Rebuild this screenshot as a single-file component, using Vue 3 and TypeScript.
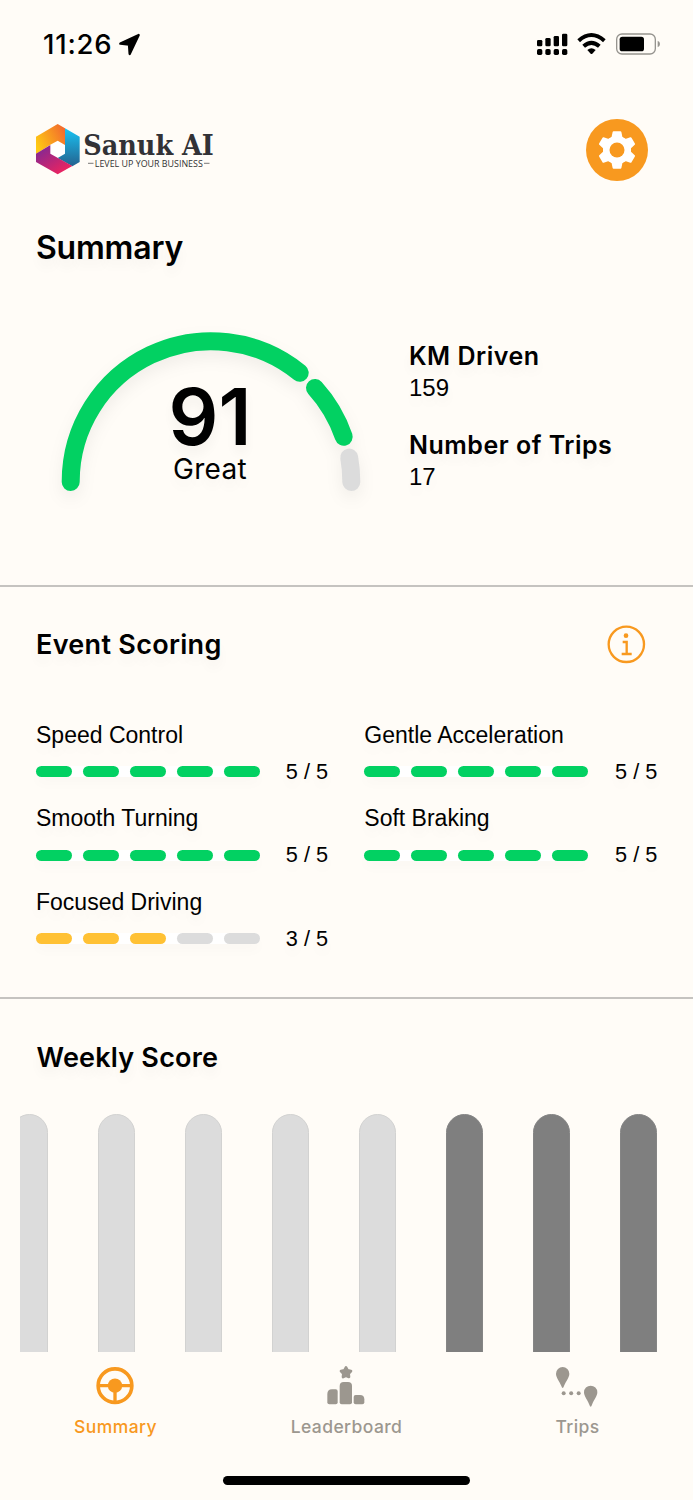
<script setup lang="ts">
interface EventScore {
  label: string
  score: number
}

const events: EventScore[] = [
  { label: 'Speed Control', score: 5 },
  { label: 'Gentle Acceleration', score: 5 },
  { label: 'Smooth Turning', score: 5 },
  { label: 'Soft Braking', score: 5 },
  { label: 'Focused Driving', score: 3 },
]

const segmentClass = (score: number, n: number): string =>
  n > score ? 'off' : score >= 4 ? 'good' : 'fair'

const weeks: boolean[] = [false, false, false, false, false, true, true, true]
const teeth: number[] = [0, 60, 120, 180, 240, 300]
</script>

<template>
  <div class="screen">
    <div class="status">
      <span class="time">11:26</span>
      <svg class="arrow" viewBox="294 69 68 69">
        <path d="M356 75 L301 101 L327 104 L329 132 Z" stroke="#000" stroke-width="7" stroke-linejoin="round" />
      </svg>
      <svg class="radio" viewBox="51 36 372 72">
        <g>
          <rect x="51" y="60" width="16" height="19" rx="4" />
          <rect x="76" y="54" width="16" height="25" rx="4" />
          <rect x="101" y="48" width="16" height="31" rx="4" />
          <rect x="126" y="41" width="16" height="38" rx="4" />
          <rect v-for="x in [51, 76, 101, 126]" :key="x" :x="x" y="87" width="16" height="18" rx="5" />
        </g>
        <g fill="none" stroke="#000" stroke-width="12">
          <path d="M176 62 Q214 28 253 62" />
          <path d="M191 79 Q214 58 238 79" />
        </g>
        <path d="M202 90 Q214 79 227 90 L217 101 Q214 103 212 101 Z" />
        <rect x="290" y="42" width="116" height="60" rx="16" fill="none" stroke="#96948f" stroke-width="4" />
        <rect x="299" y="50" width="73" height="44" rx="8" />
        <path d="M413 62 Q420 65 420 72 Q420 79 413 82 Z" fill="#96948f" />
      </svg>
    </div>

    <header class="header">
      <svg class="logo" viewBox="0 0 180 52">
        <defs>
          <linearGradient id="warm" x1="0" y1="0.7" x2="1" y2="0.2"><stop offset="0" stop-color="#ffcb12" /><stop offset="1" stop-color="#f26a2e" /></linearGradient>
          <linearGradient id="cool" x1="0.5" y1="0" x2="0.5" y2="1"><stop offset="0" stop-color="#19c3f3" /><stop offset="1" stop-color="#24628f" /></linearGradient>
          <linearGradient id="berry" x1="0" y1="0" x2="0.8" y2="1"><stop offset="0" stop-color="#74299a" /><stop offset="1" stop-color="#f4235c" /></linearGradient>
        </defs>
        <g transform="translate(-16 -113) scale(0.33333)">
          <path fill="#fff" d="M113 391 L137 404 V432 L113 446 L89 432 V404Z" />
          <path fill="url(#warm)" d="M48 380 L113 342 L135 355 V405 L113 392 L91 404 L48 432Z" />
          <path fill="url(#cool)" d="M135 355 L179 380 V456 L157 469 L113 444 L135 431Z" />
          <path fill="url(#berry)" d="M48 431 L91 405 V431 L157 468 L113 493 L48 456Z" />
        </g>
        <text class="brand" x="47.300" y="32.300" textLength="130.500" lengthAdjust="spacingAndGlyphs">Sanuk AI</text>
        <path d="M52 40.300 H57.500 M168 40.300 H173.500" stroke="#555" stroke-width="0.8" />
        <text class="tagline" x="58.800" y="43.600" textLength="108" lengthAdjust="spacingAndGlyphs">LEVEL UP YOUR BUSINESS</text>
      </svg>
      <div class="settings">
        <svg viewBox="-31 -31 62 62">
          <g fill="#fff" stroke="#fff" stroke-width="2" stroke-linejoin="round">
            <circle r="13" />
            <path v-for="a in teeth" :key="a" :transform="`rotate(${a})`" d="M-3.400 -17.700 H3.400 L4.500 -12.500 L7 -10 H-7 L-4.500 -12.500Z" />
          </g>
          <circle r="7.500" fill="#f8991f" />
        </svg>
      </div>
    </header>

    <section class="summary">
      <h1>Summary</h1>
      <div class="overview">
        <div class="gauge">
          <svg viewBox="0 0 340 200">
            <g fill="none" stroke-width="18" stroke-linecap="round">
              <path d="M30.700 172 A140.400 140.400 0 0 1 259.700 62.700" stroke="#02d162" />
              <path d="M275 78 A140.400 140.400 0 0 1 303.700 126.700" stroke="#02d162" />
              <path d="M309.200 147.500 A140.400 140.400 0 0 1 311.300 172" stroke="#dcdcdc" />
            </g>
          </svg>
          <div class="reading">
            <strong>91</strong>
            <span>Great</span>
          </div>
        </div>
        <dl class="facts">
          <dt>KM Driven</dt>
          <dd>159</dd>
          <dt class="trips">Number of Trips</dt>
          <dd>17</dd>
        </dl>
      </div>
    </section>

    <section class="events">
      <div class="title-row">
        <h2>Event Scoring</h2>
        <svg class="info" viewBox="771 44 116 116">
          <g fill="none" stroke="#f8991f">
            <circle cx="829" cy="102" r="53" stroke-width="7" />
            <path d="M818 95 H830 V131 M815 131 H845" stroke-width="7" />
          </g>
          <circle cx="828" cy="76" r="7" fill="#f8991f" />
        </svg>
      </div>
      <div class="grid">
        <div v-for="e in events" :key="e.label" class="event">
          <div class="label">{{ e.label }}</div>
          <div class="meter">
            <div class="track">
              <i v-for="n in 5" :key="n" :class="segmentClass(e.score, n)"></i>
            </div>
            <span class="score">{{ e.score }} / 5</span>
          </div>
        </div>
      </div>
    </section>

    <section class="weekly">
      <h2>Weekly Score</h2>
      <div class="bars">
        <div v-for="(active, i) in weeks" :key="i" class="bar" :class="{ active }"></div>
      </div>
    </section>

    <nav class="tabs">
      <div class="tab current">
        <svg viewBox="97 69 138 132">
          <g fill="none" stroke="currentColor">
            <circle cx="166" cy="137" r="50.500" stroke-width="11" />
            <path d="M116 137 H216 M166 137 V187" stroke-width="10" />
          </g>
          <circle cx="166" cy="137" r="21.500" fill="currentColor" />
        </svg>
        <span>Summary</span>
      </div>
      <div class="tab">
        <svg viewBox="790 69 138 132">
          <g fill="currentColor">
            <path d="M803 162 Q803 148 817 148 H828 Q834 148 834 154 V187 Q834 193 828 193 H809 Q803 193 803 187Z" />
            <path d="M840 138 Q840 126 852 126 H865 Q877 126 877 138 V187 Q877 193 871 193 H846 Q840 193 840 187Z" />
            <path d="M882 171 Q882 165 888 165 H901 Q914 165 914 178 V187 Q914 193 908 193 H888 Q882 193 882 187Z" />
            <path d="M859 82 L864 91 L874 93 L867 101 L868 111 L859 107 L850 111 L851 101 L844 93 L854 91Z" stroke="currentColor" stroke-width="8" stroke-linejoin="round" />
          </g>
        </svg>
        <span>Leaderboard</span>
      </div>
      <div class="tab">
        <svg viewBox="463 69 138 132">
          <g fill="currentColor">
            <path d="M489 144 Q487 144 485 138 C479 122 469 113 469 101 A20 20 0 0 1 509 101 C509 113 499 122 493 138 Q491 144 489 144Z" />
            <path d="M573 200 Q571 200 569 194 C563 178 553 169 553 157 A20 20 0 0 1 593 157 C593 169 583 178 577 194 Q575 200 573 200Z" />
            <circle v-for="x in [492, 514.500, 537]" :key="x" :cx="x" cy="160" r="6" />
          </g>
        </svg>
        <span>Trips</span>
      </div>
    </nav>
    <div class="home"></div>
  </div>
</template>

<style>
body {
  background: #fffcf7;
}
</style>

<style scoped>
.screen {
  width: 693px;
  height: 1500px;
  overflow: hidden;
  display: flex;
  flex-direction: column;
  background: #fffcf7;
  color: #000;
  font-family: Inter, sans-serif;
}
.screen * {
  box-sizing: border-box;
}
h1, h2, dl, dd {
  margin: 0;
}
svg {
  display: block;
}
.status {
  display: flex;
  align-items: center;
  height: 119px;
  padding: 0 32px 31px 43px;
}
.time {
  font-size: 27.500px;
  font-weight: 500;
  letter-spacing: 0.8px;
  width: 75px;
}
.arrow {
  width: 22.700px;
  height: 23px;
}
.radio {
  width: 124px;
  height: 24px;
  margin-left: auto;
}
.header {
  display: flex;
  justify-content: space-between;
  height: 62px;
  padding: 0 45px 0 36px;
}
.logo {
  width: 180px;
  height: 52px;
  margin-top: 4px;
  overflow: visible;
}
.brand {
  font: 700 28.500px "DejaVu Serif", serif;
  fill: #323236;
}
.tagline {
  font: 400 9.400px "Open Sans", sans-serif;
  fill: #333;
}
.settings {
  width: 62px;
  height: 62px;
  border-radius: 50%;
  background: #f8991f;
}
.summary {
  height: 404px;
  padding: 47px 0 0 36px;
}
h1, h2, dt, .reading, .label, .score, dd {
  text-shadow: 0 8px 12px rgba(0, 0, 0, 0.045);
}
h1 {
  font-size: 32px;
  line-height: 40px;
  font-weight: 600;
  letter-spacing: -0.2px;
}
h2 {
  font-size: 27px;
  line-height: 36px;
  font-weight: 600;
  letter-spacing: 0.3px;
}
.overview {
  display: flex;
  margin: 42px 0 0 4px;
}
.gauge {
  display: grid;
  width: 340px;
  height: 200px;
}
.gauge > * {
  grid-area: 1 / 1;
}
.gauge svg {
  width: 340px;
  height: 200px;
  overflow: visible;
  filter: drop-shadow(0 7px 8px rgba(0, 0, 0, 0.06));
}
.reading {
  display: flex;
  flex-direction: column;
  align-items: center;
  padding-top: 68px;
}
.reading strong {
  font-size: 78px;
  line-height: 78px;
  font-weight: 600;
}
.reading span {
  font-size: 28px;
  line-height: 28px;
  margin-top: -1px;
  letter-spacing: 0.3px;
}
.facts {
  padding: 29px 0 0 29px;
}
dt {
  font-size: 25px;
  line-height: 34px;
  font-weight: 600;
  letter-spacing: 0.5px;
}
dt.trips {
  margin-top: 26px;
}
dd {
  font: 24px/29px "Liberation Sans", sans-serif;
}
.events {
  height: 412px;
  padding: 40px 36px 0;
  border-top: 2px solid #c5c3c0;
}
.title-row {
  display: flex;
  justify-content: space-between;
  height: 39px;
}
.info {
  width: 38.700px;
  height: 38.700px;
  margin: -2px 11px 0 0;
}
.grid {
  display: grid;
  grid-template-columns: 292px 293px;
  column-gap: 36.300px;
  grid-auto-rows: 83.500px;
  margin-top: 54.500px;
  font-family: "Liberation Sans", sans-serif;
}
.label {
  font-size: 23px;
  line-height: 28px;
}
.meter {
  display: flex;
  align-items: center;
  justify-content: space-between;
  height: 26px;
  margin-top: 10px;
}
.track {
  display: flex;
  justify-content: space-between;
  width: 223.700px;
  height: 11px;
  border-radius: 6px;
  background: #fff;
  box-shadow: 0 7px 12px rgba(0, 0, 0, 0.018);
}
.track i {
  width: 36px;
  border-radius: 6px;
}
.good {
  background: #02d162;
}
.fair {
  background: #ffc134;
}
.off {
  background: #dcdcdc;
}
.score {
  font-size: 21.700px;
}
.weekly {
  height: 355px;
  padding: 41px 36px 0 20px;
  border-top: 2px solid #c5c3c0;
}
.weekly h2 {
  padding-left: 16.500px;
  letter-spacing: 0.2px;
}
.bars {
  display: flex;
  justify-content: flex-end;
  gap: 50px;
  height: 238px;
  margin-top: 38px;
  overflow: hidden;
}
.bar {
  flex: none;
  width: 37.300px;
  margin-right: -0.300px;
  height: 260px;
  border-radius: 18.500px;
  background: #dcdcdc;
  border: 1px solid #d2d2d1;
}
.bar.active {
  background: #7f7f7f;
  border-color: #858585;
}
.tabs {
  display: flex;
  height: 124px;
  padding-top: 11px;
  color: #9c978f;
}
.tab {
  flex: 1;
  display: flex;
  flex-direction: column;
  align-items: center;
}
.tab svg {
  width: 46px;
  height: 44px;
  margin-left: -1px;
}
.tab span {
  margin-top: 9px;
  font-size: 17.500px;
  line-height: 22px;
  font-weight: 500;
  letter-spacing: 0.4px;
}
.home {
  width: 247px;
  height: 9px;
  margin-left: 223px;
  border-radius: 5px;
  background: #000;
}
.current {
  color: #f8991f;
}
</style>
